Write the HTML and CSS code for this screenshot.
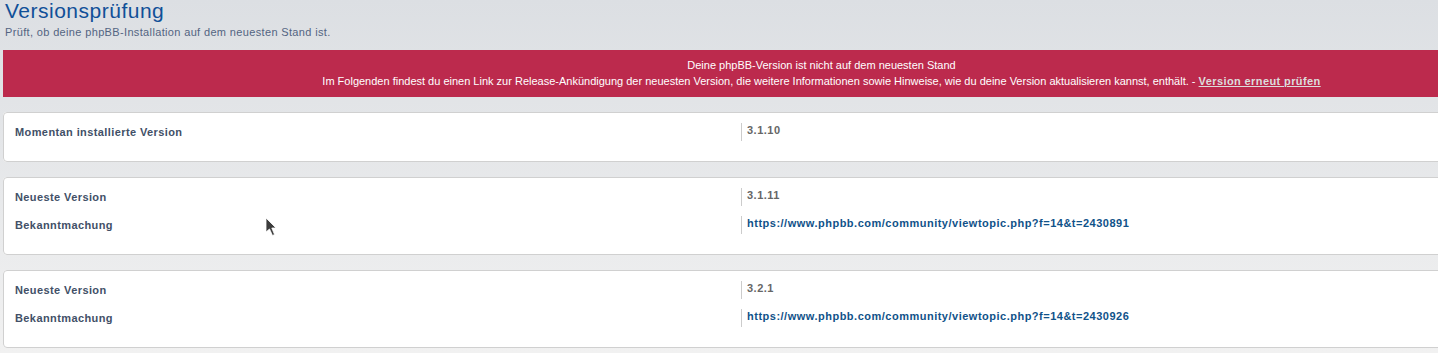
FILE: index.html
```html
<!DOCTYPE html>
<html lang="de">
  <head>
    <meta charset="UTF-8" />
    <meta name="viewport" content="width=device-width, initial-scale=1.0" />
    <title>Versionsprüfung</title>
    <link rel="stylesheet" href="styles.css">
  </head>
  <body>
    <main class="page">
      <header class="page-head">
        <h1>Versionsprüfung</h1>
        <p class="lead">Prüft, ob deine phpBB-Installation auf dem neuesten Stand ist.</p>
      </header>

      <div class="errorbox">
        <p class="errorbox-title">Deine phpBB-Version ist nicht auf dem neuesten Stand</p>
        <p>Im Folgenden findest du einen Link zur Release-Ankündigung der neuesten Version, die weitere Informationen sowie Hinweise, wie du deine Version aktualisieren kannst, enthält. - <a href="#">Version erneut prüfen</a></p>
      </div>

      <fieldset class="card">
        <dl>
          <dt>Momentan installierte Version</dt>
          <dd><strong>3.1.10</strong></dd>
        </dl>
      </fieldset>

      <fieldset class="card">
        <dl>
          <dt>Neueste Version</dt>
          <dd><strong>3.1.11</strong></dd>
        </dl>
        <dl>
          <dt>Bekanntmachung</dt>
          <dd><a href="#">https://www.phpbb.com/community/viewtopic.php?f=14&amp;t=2430891</a></dd>
        </dl>
      </fieldset>

      <fieldset class="card">
        <dl>
          <dt>Neueste Version</dt>
          <dd><strong>3.2.1</strong></dd>
        </dl>
        <dl>
          <dt>Bekanntmachung</dt>
          <dd><a href="#">https://www.phpbb.com/community/viewtopic.php?f=14&amp;t=2430926</a></dd>
        </dl>
      </fieldset>
    </main>

    <!-- mouse pointer left in the screenshot -->
    <svg class="pointer" width="13" height="20" viewBox="0 0 13 20">
      <path d="M1 1 L1 15 L4.5 12 L7.5 18.5 L9.5 17.5 L6.8 11 L11 11 Z" fill="#3c3c3c" stroke="#ffffff" stroke-width="0.8" stroke-linejoin="round" />
    </svg>
  </body>
</html>
```

FILE: styles.css
```css
/* Basic Reset */
* {
  box-sizing: border-box;
  margin: 0;
  padding: 0;
}

html,
body {
  height: 100%;
}

body {
  font-family: "Liberation Sans", Arial, sans-serif;
  font-size: 11px;
  background: linear-gradient(#dcdfe3, #f1f1f1);
  overflow: hidden;
  position: relative;
}

/* the ACP content column is wider than the window */
.page {
  width: 1640px;
}

/* Header */
.page-head {
  padding-left: 5px;
}

.page-head h1 {
  font-size: 21px;
  line-height: 22px;
  font-weight: normal;
  letter-spacing: 0.5px;
  color: #115098;
}

.lead {
  margin-top: 4px;
  line-height: 13px;
  letter-spacing: 0.35px;
  color: #536482;
}

/* Error box */
.errorbox {
  margin: 11px 0 15px 3px;
  padding: 7px 10px 8px;
  background-color: #bc2a4d;
  color: #ffffff;
  text-align: center;
  line-height: 16px;
}

.errorbox a {
  color: #dddddd;
  font-weight: bold;
  letter-spacing: 0.4px;
  text-decoration: underline;
}

/* Cards */
.card {
  margin: 0 0 15px 3px;
  padding: 10px 11px 20px;
  background-color: #ffffff;
  border: 1px solid #d0d0d0;
  border-radius: 4px;
}

.card dl {
  display: grid;
  grid-template-columns: 726px 1fr;
  height: 18px;
}

.card dl + dl {
  margin-top: 10px;
}

.card dt {
  padding-top: 1px;
  line-height: 17px;
  font-weight: bold;
  letter-spacing: 0.4px;
  color: #425067;
}

.card dd {
  border-left: 1px solid #cccccc;
  padding-left: 5px;
  line-height: 14px;
  font-weight: bold;
  letter-spacing: 0.5px;
  color: #666666;
}

.card dd a {
  color: #105289;
  text-decoration: none;
}

/* Pointer */
.pointer {
  position: absolute;
  left: 265px;
  top: 217px;
}
```
